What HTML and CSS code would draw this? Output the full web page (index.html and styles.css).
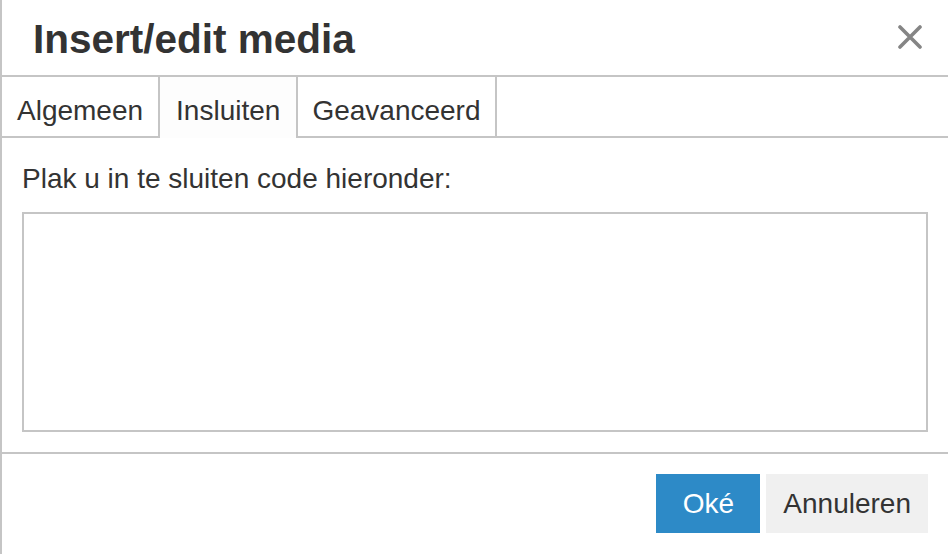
FILE: index.html
```html
<!DOCTYPE html>
<html lang="nl">
<head>
<meta charset="utf-8">
<title>Insert/edit media</title>
<link rel="stylesheet" href="styles.css">
</head>
<body>
<div class="dialog">
  <div class="header">
    <h1 class="title">Insert/edit media</h1>
    <button class="close" aria-label="Sluiten">
      <svg width="24" height="24" viewBox="0 0 24 24"><path d="M2 2 L22 22 M22 2 L2 22" stroke="#858585" stroke-width="3.6" stroke-linecap="round"/></svg>
    </button>
  </div>
  <div class="tabs">
    <div class="tab">Algemeen</div>
    <div class="tab active">Insluiten</div>
    <div class="tab">Geavanceerd</div>
  </div>
  <div class="body">
    <label class="label" for="code">Plak u in te sluiten code hieronder:</label>
    <textarea id="code" class="code"></textarea>
  </div>
  <div class="footer">
    <button class="btn primary">Oké</button>
    <button class="btn">Annuleren</button>
  </div>
</div>
</body>
</html>
```
FILE: styles.css
```css
* { box-sizing: border-box; }
html, body { margin: 0; padding: 0; background: #fff; }
body {
  font-family: "Liberation Sans", Arial, Helvetica, sans-serif;
  color: #333;
  width: 948px;
  height: 554px;
  overflow: hidden;
}
.dialog {
  border-left: 2px solid #c5c5c5;
  height: 554px;
  display: flex;
  flex-direction: column;
}
.header {
  height: 77px;
  padding: 3px 0 0 31px;
  border-bottom: 2px solid #c5c5c5;
  display: flex;
  align-items: center;
  justify-content: space-between;
}
.title {
  margin: 0;
  font-size: 40.5px;
  font-weight: bold;
  line-height: 46px;
  color: #333;
}
.close {
  border: 0;
  background: none;
  padding: 0;
  margin: -5px 26px 0 0;
  width: 24px;
  height: 24px;
  display: flex;
}
.tabs {
  display: flex;
  align-items: flex-start;
  height: 61px;
  border-bottom: 2px solid #c5c5c5;
}
.tab {
  height: 59px;
  padding: 9px 15px 0;
  line-height: 50px;
  font-size: 28px;
  border-right: 2px solid #c5c5c5;
  background: #fff;
  color: #333;
}
.tab.active {
  height: 61px;
  background: #fdfdfd;
  padding: 9px 16px 0;
}
.tab:last-child {
  padding: 9px 14px 0;
}
.body {
  flex: 1;
  padding: 20px;
  display: flex;
  flex-direction: column;
  gap: 16px;
  border-bottom: 2px solid #c5c5c5;
}
.label {
  font-size: 28px;
  line-height: 34px;
  margin-top: 4px;
  color: #333;
}
.code {
  flex: 1;
  border: 2px solid #c5c5c5;
  border-radius: 0;
  resize: none;
  margin: 0;
  background: #fff;
}
.footer {
  height: 100px;
  padding: 20px 20px 21px;
  display: flex;
  justify-content: flex-end;
  gap: 6px;
}
.btn {
  height: 59px;
  border: 0;
  font-family: inherit;
  font-size: 28px;
  padding: 0 17px;
  background: #f0f0f0;
  color: #333;
}
.btn.primary {
  min-width: 104px;
  background: #2d8ac7;
  color: #fff;
}
```
